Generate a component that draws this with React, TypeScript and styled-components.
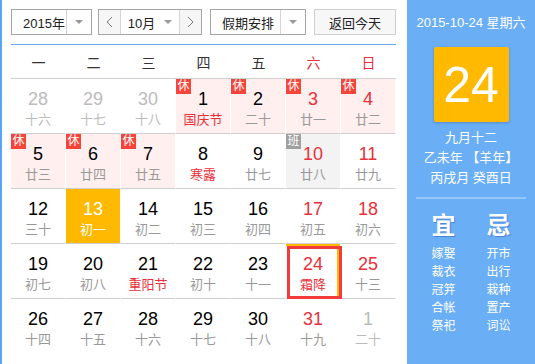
import React from 'react'
import styled, { createGlobalStyle } from 'styled-components'

const GlobalStyle = createGlobalStyle`
  html, body {
    margin: 0;
    padding: 0;
    background: #fff;
  }
  body {
    font-family: "Liberation Sans", "Noto Sans CJK SC", sans-serif;
    color: #333;
  }
`

const RED = '#e8303a'
const ORANGE = '#ffb900'

type Tone = 'normal' | 'red' | 'muted' | 'today'

interface Day {
  num: number
  lunar: string
  numTone?: Tone
  lunarTone?: Tone
  badge?: 'rest' | 'work'
  bg?: 'pink' | 'grey' | 'today'
  selected?: boolean
}

const days: Day[] = [
  { num: 28, lunar: '十六', numTone: 'muted', lunarTone: 'muted' },
  { num: 29, lunar: '十七', numTone: 'muted', lunarTone: 'muted' },
  { num: 30, lunar: '十八', numTone: 'muted', lunarTone: 'muted' },
  { num: 1, lunar: '国庆节', lunarTone: 'red', badge: 'rest', bg: 'pink' },
  { num: 2, lunar: '二十', badge: 'rest', bg: 'pink' },
  { num: 3, lunar: '廿一', numTone: 'red', badge: 'rest', bg: 'pink' },
  { num: 4, lunar: '廿二', numTone: 'red', badge: 'rest', bg: 'pink' },

  { num: 5, lunar: '廿三', badge: 'rest', bg: 'pink' },
  { num: 6, lunar: '廿四', badge: 'rest', bg: 'pink' },
  { num: 7, lunar: '廿五', badge: 'rest', bg: 'pink' },
  { num: 8, lunar: '寒露', lunarTone: 'red' },
  { num: 9, lunar: '廿七' },
  { num: 10, lunar: '廿八', numTone: 'red', badge: 'work', bg: 'grey' },
  { num: 11, lunar: '廿九', numTone: 'red' },

  { num: 12, lunar: '三十' },
  { num: 13, lunar: '初一', numTone: 'today', lunarTone: 'today', bg: 'today' },
  { num: 14, lunar: '初二' },
  { num: 15, lunar: '初三' },
  { num: 16, lunar: '初四' },
  { num: 17, lunar: '初五', numTone: 'red' },
  { num: 18, lunar: '初六', numTone: 'red' },

  { num: 19, lunar: '初七' },
  { num: 20, lunar: '初八' },
  { num: 21, lunar: '重阳节', lunarTone: 'red' },
  { num: 22, lunar: '初十' },
  { num: 23, lunar: '十一' },
  { num: 24, lunar: '霜降', numTone: 'red', lunarTone: 'red', selected: true },
  { num: 25, lunar: '十三', numTone: 'red' },

  { num: 26, lunar: '十四' },
  { num: 27, lunar: '十五' },
  { num: 28, lunar: '十六' },
  { num: 29, lunar: '十七' },
  { num: 30, lunar: '十八' },
  { num: 31, lunar: '十九', numTone: 'red' },
  { num: 1, lunar: '二十', numTone: 'muted', lunarTone: 'muted' },
]

const weekDays = ['一', '二', '三', '四', '五', '六', '日']
const yi = ['嫁娶', '裁衣', '冠笄', '合帐', '祭祀']
const ji = ['开市', '出行', '栽种', '置产', '词讼']

const numColor = (t: Tone = 'normal') =>
  t === 'red' ? RED : t === 'muted' ? '#bbb' : t === 'today' ? '#fff' : '#000'
const lunarColor = (t: Tone = 'normal') =>
  t === 'red' ? RED : t === 'muted' ? '#bbb' : t === 'today' ? '#fff' : '#999'
const cellBg = (b?: Day['bg']) =>
  b === 'pink' ? '#ffefef' : b === 'grey' ? '#f3f3f3' : b === 'today' ? ORANGE : '#fff'

const Page = styled.div`
  display: flex;
  width: 535px;
  height: 364px;
  overflow: hidden;
  border-left: 2px solid #58a4f5;
  box-sizing: border-box;
`

const Calendar = styled.div`
  width: 405px;
  padding: 9px 0 0 9px;
  box-sizing: border-box;
`

const Toolbar = styled.div`
  display: flex;
  align-items: center;
  height: 26px;
  margin-bottom: 9px;
`

const Select = styled.div<{ $width: number; $labelWidth: number; $gap?: number }>`
  display: grid;
  grid-template-columns: ${(p) => p.$labelWidth}px 1fr;
  width: ${(p) => p.$width}px;
  height: 26px;
  margin-right: ${(p) => p.$gap ?? 0}px;
  border: 1px solid #a5a5a5;
  box-sizing: border-box;
  font-size: 13px;
  color: #222;
`

const SelectLabel = styled.div<{ $pad?: number }>`
  display: flex;
  align-items: center;
  padding-left: ${(p) => p.$pad ?? 10}px;
  border-right: 1px solid #d4d4d4;
`

const CaretBox = styled.div`
  display: flex;
  align-items: center;
  justify-content: center;
`

const Caret = styled.span`
  width: 0;
  height: 0;
  border-left: 4px solid transparent;
  border-right: 4px solid transparent;
  border-top: 4px solid #999;
`

const MonthPicker = styled.div`
  display: grid;
  grid-template-columns: 22px 1fr 22px;
  width: 104px;
  height: 26px;
  margin-right: 8px;
  border: 1px solid #a5a5a5;
  box-sizing: border-box;
  font-size: 13px;
  color: #222;
`

const NavButton = styled.div<{ $side: 'left' | 'right' }>`
  display: flex;
  align-items: center;
  justify-content: center;
  background: #f6f6f6;
  ${(p) => (p.$side === 'left' ? 'border-right' : 'border-left')}: 1px solid #d4d4d4;
`

const MonthLabel = styled.div`
  display: flex;
  align-items: center;
  justify-content: center;
  gap: 9px;
`

const TodayButton = styled.div`
  display: flex;
  align-items: center;
  justify-content: center;
  width: 82px;
  height: 26px;
  border: 1px solid #cfcfcf;
  background: #f7f7f7;
  box-sizing: border-box;
  font-size: 13px;
  color: #222;
`

const Table = styled.div`
  width: 385px;
`

const WeekHeader = styled.div`
  display: grid;
  grid-template-columns: repeat(7, 55px);
  height: 35px;
  border-top: 1px solid #65a8f0;
  border-bottom: 1px solid #cfcfcf;
  box-sizing: border-box;
`

const WeekDay = styled.div<{ $weekend: boolean }>`
  display: flex;
  align-items: center;
  justify-content: center;
  font-size: 14px;
  color: ${(p) => (p.$weekend ? RED : '#333')};
`

const Grid = styled.div`
  display: grid;
  grid-template-columns: repeat(7, 55px);
  grid-auto-rows: 55px;
`

const Cell = styled.div<{ $bg: string; $lastRow: boolean; $selected?: boolean }>`
  position: relative;
  display: flex;
  flex-direction: column;
  align-items: center;
  padding-top: 10px;
  box-sizing: border-box;
  background: ${(p) => p.$bg};
  border-right: 1px solid #fff;
  border-bottom: 1px solid ${(p) => (p.$lastRow ? 'transparent' : '#cfcfcf')};
  ${(p) =>
    p.$selected &&
    `box-shadow: inset 0 2px 0 ${ORANGE}, inset -3px 0 0 ${ORANGE};`}
`

const SelectedRing = styled.div`
  position: absolute;
  top: 2px;
  left: 1px;
  right: -2px;
  bottom: -1px;
  border: 3px solid #f23b3b;
  z-index: 1;
`

const DayNum = styled.div<{ $tone?: Tone }>`
  font-size: 18px;
  line-height: 20px;
  color: ${(p) => numColor(p.$tone)};
`

const Lunar = styled.div<{ $tone?: Tone }>`
  margin-top: 2px;
  font-size: 13px;
  line-height: 18px;
  color: ${(p) => lunarColor(p.$tone)};
`

const Badge = styled.span<{ $kind: 'rest' | 'work' }>`
  position: absolute;
  top: 0;
  left: 0;
  width: 15px;
  height: 15px;
  display: flex;
  align-items: center;
  justify-content: center;
  font-size: 12px;
  line-height: 15px;
  color: #fff;
  background: ${(p) => (p.$kind === 'rest' ? '#f5453b' : '#a0a0a0')};
`

const Panel = styled.div`
  flex: 1;
  background: #6aaef6;
  color: #fff;
  display: flex;
  flex-direction: column;
  align-items: center;
  padding-top: 14px;
`

const PanelDate = styled.div`
  font-size: 13px;
  line-height: 18px;
`

const BigDay = styled.div`
  width: 75px;
  height: 75px;
  margin: 15px 0 6px;
  display: flex;
  align-items: center;
  justify-content: center;
  background: ${ORANGE};
  border-radius: 2px;
  box-shadow: 0 1px 3px rgba(0, 0, 0, 0.2);
  font-size: 50px;
  color: #fff;
`

const LunarLine = styled.div`
  font-size: 13px;
  line-height: 20px;
  white-space: pre;
`

const Divider = styled.div`
  width: 110px;
  height: 2px;
  margin: 9px 0 12px;
  background: rgba(255, 255, 255, 0.3);
`

const YiJi = styled.div`
  display: grid;
  grid-template-columns: 55px 55px;
  justify-items: center;
`

const YiJiColumn = styled.div`
  display: flex;
  flex-direction: column;
  align-items: center;
`

const YiJiHead = styled.div`
  font-size: 24px;
  line-height: 30px;
  font-weight: bold;
  margin-bottom: 4px;
  text-shadow: 1px 1px 1px rgba(60, 100, 190, 0.6);
`

const YiJiItem = styled.div`
  font-size: 12px;
  line-height: 18px;
`

const Chevron = ({ dir }: { dir: 'left' | 'right' }) => (
  <svg width="7" height="12" viewBox="0 0 7 12">
    <polyline
      points={dir === 'left' ? '6,1 1,6 6,11' : '1,1 6,6 1,11'}
      fill="none"
      stroke="#777"
      strokeWidth="1"
    />
  </svg>
)

export default function App() {
  return (
    <>
      <GlobalStyle />
      <Page>
        <Calendar>
          <Toolbar>
            <Select $width={81} $labelWidth={55} $gap={6}>
              <SelectLabel $pad={11}>2015年</SelectLabel>
              <CaretBox>
                <Caret />
              </CaretBox>
            </Select>
            <MonthPicker>
              <NavButton $side="left">
                <Chevron dir="left" />
              </NavButton>
              <MonthLabel>
                <span>10月</span>
                <Caret />
              </MonthLabel>
              <NavButton $side="right">
                <Chevron dir="right" />
              </NavButton>
            </MonthPicker>
            <Select $width={96} $labelWidth={70} $gap={8}>
              <SelectLabel $pad={11}>假期安排</SelectLabel>
              <CaretBox>
                <Caret />
              </CaretBox>
            </Select>
            <TodayButton>返回今天</TodayButton>
          </Toolbar>

          <Table>
            <WeekHeader>
              {weekDays.map((d, i) => (
                <WeekDay key={d} $weekend={i >= 5}>
                  {d}
                </WeekDay>
              ))}
            </WeekHeader>
            <Grid>
              {days.map((d, i) => (
                <Cell
                  key={i}
                  $bg={cellBg(d.bg)}
                  $lastRow={i >= 28}
                  $selected={d.selected}
                >
                  {d.badge && <Badge $kind={d.badge}>{d.badge === 'rest' ? '休' : '班'}</Badge>}
                  {d.selected && <SelectedRing />}
                  <DayNum $tone={d.numTone}>{d.num}</DayNum>
                  <Lunar $tone={d.lunarTone}>{d.lunar}</Lunar>
                </Cell>
              ))}
            </Grid>
          </Table>
        </Calendar>

        <Panel>
          <PanelDate>2015-10-24 星期六</PanelDate>
          <BigDay>24</BigDay>
          <LunarLine>九月十二</LunarLine>
          <LunarLine>乙未年 【羊年】</LunarLine>
          <LunarLine>丙戌月 癸酉日</LunarLine>
          <Divider />
          <YiJi>
            <YiJiColumn>
              <YiJiHead>宜</YiJiHead>
              {yi.map((t) => (
                <YiJiItem key={t}>{t}</YiJiItem>
              ))}
            </YiJiColumn>
            <YiJiColumn>
              <YiJiHead>忌</YiJiHead>
              {ji.map((t) => (
                <YiJiItem key={t}>{t}</YiJiItem>
              ))}
            </YiJiColumn>
          </YiJi>
        </Panel>
      </Page>
    </>
  )
}
